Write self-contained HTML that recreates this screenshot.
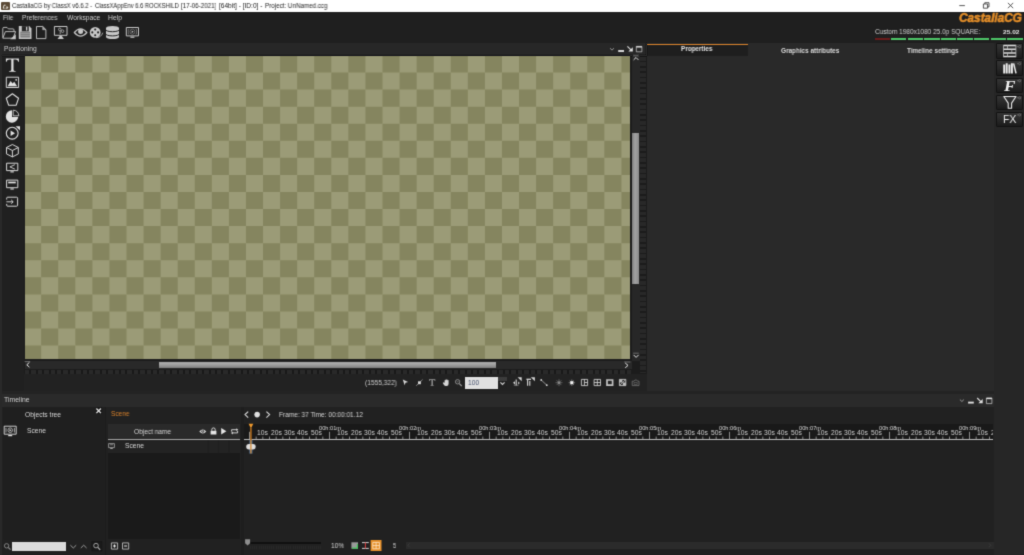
<!DOCTYPE html>
<html>
<head>
<meta charset="utf-8">
<title>CastaliaCG</title>
<style>
html,body{margin:0;padding:0;}
body{width:1024px;height:555px;overflow:hidden;background:#252525;font-family:"Liberation Sans",sans-serif;position:relative;color:#d0d0d0;font-size:6.6px;}
.a{position:absolute;}
.t{position:absolute;white-space:nowrap;line-height:1;transform-origin:0 50%;will-change:transform;}
svg{position:absolute;overflow:visible;}
#titlebar{left:0;top:0;width:1024px;height:12px;background:#fff;}
#menubar{left:0;top:12px;width:1024px;height:31px;background:#1f1f1f;}
#poshead{left:0;top:42.6px;width:646px;height:12.9px;background:#272727;}
#lefttools{left:0;top:55.5px;width:25px;height:336px;background:#202020;}
#canvasbg{left:24px;top:55.5px;width:623px;height:318px;background:#1c1c1c;}
#canvasbar{left:24px;top:374px;width:623px;height:18px;background:#222;}
#checker{left:25px;top:56px;width:605.3px;height:303px;background:#9b9b77;overflow:hidden;}
#rightpanel{left:646.5px;top:43px;width:347.5px;height:349px;background:#292929;}
#rightstrip{left:994px;top:43px;width:30px;height:512px;background:#262626;}
#gap{left:0;top:391.2px;width:994px;height:2.8px;background:#232323;}
#tlhead{left:0;top:393.8px;width:994px;height:13px;background:#2a2a2a;}
#tlbody{left:0;top:406.8px;width:994px;height:149px;background:#212121;}
#lframe{left:0;top:42.6px;width:2.3px;height:513px;background:#292929;}
.btn{position:absolute;left:996.2px;width:27.2px;height:15.8px;background:linear-gradient(#343434,#2a2a2a 45%,#1b1b1b);border:0.7px solid #121212;box-sizing:border-box;border-radius:1px;}
#root{position:absolute;left:0;top:0;width:1024px;height:555px;overflow:hidden;filter:url(#soft);}
</style>
</head>
<body>
<svg width="0" height="0" style="position:absolute"><defs><filter id="soft" x="0" y="0" width="1" height="1" color-interpolation-filters="sRGB"><feConvolveMatrix order="3" kernelMatrix="0.0192 0.1001 0.0192 0.1001 0.5228 0.1001 0.0192 0.1001 0.0192" edgeMode="duplicate" preserveAlpha="true"/></filter></defs></svg>
<div id="root">
<div class="a" id="titlebar"></div>
<div class="a" id="menubar"></div>
<div class="a" id="poshead"></div>
<div class="a" id="lefttools"></div>
<div class="a" id="canvasbg"></div>
<div class="a" id="canvasbar"></div>
<div class="a" id="checker"><svg width="606" height="303" style="left:0;top:0" stroke="#85855f" stroke-width="17.0667" stroke-dasharray="17.0667 17.0667"><path d="M-0.90 7.98h640" stroke-dashoffset="17.0667"/><path d="M-0.90 25.05h640" stroke-dashoffset="0.0000"/><path d="M-0.90 42.12h640" stroke-dashoffset="17.0667"/><path d="M-0.90 59.18h640" stroke-dashoffset="0.0000"/><path d="M-0.90 76.25h640" stroke-dashoffset="17.0667"/><path d="M-0.90 93.32h640" stroke-dashoffset="0.0000"/><path d="M-0.90 110.38h640" stroke-dashoffset="17.0667"/><path d="M-0.90 127.45h640" stroke-dashoffset="0.0000"/><path d="M-0.90 144.52h640" stroke-dashoffset="17.0667"/><path d="M-0.90 161.58h640" stroke-dashoffset="0.0000"/><path d="M-0.90 178.65h640" stroke-dashoffset="17.0667"/><path d="M-0.90 195.72h640" stroke-dashoffset="0.0000"/><path d="M-0.90 212.78h640" stroke-dashoffset="17.0667"/><path d="M-0.90 229.85h640" stroke-dashoffset="0.0000"/><path d="M-0.90 246.92h640" stroke-dashoffset="17.0667"/><path d="M-0.90 263.98h640" stroke-dashoffset="0.0000"/><path d="M-0.90 281.05h640" stroke-dashoffset="17.0667"/><path d="M-0.90 298.12h640" stroke-dashoffset="0.0000"/><path d="M-0.90 315.18h640" stroke-dashoffset="17.0667"/></svg></div>
<div class="a" id="rightpanel"></div>
<div class="a" id="rightstrip"></div>
<div class="a" id="gap"></div>
<div class="a" id="tlhead"></div>
<div class="a" id="tlbody"></div>
<div class="a" id="lframe"></div>
<div class="a" style="left:1px;top:1.5px;width:8.5px;height:8.5px;background:#5b4a36;border-radius:1px"></div>
<svg width="9" height="9" style="left:1px;top:1.5px" viewBox="0 0 9 9"><path d="M2.2 6.2 L3 3.2 L4.6 3.2 M2.2 6.2 L3.6 6.2 M4.6 6.2 L6.6 6.2 L6.8 5 L5.2 5" fill="none" stroke="#f2efe8" stroke-width="0.9"/></svg>
<svg width="1024" height="12" style="left:0;top:0" fill="none" stroke="#222" stroke-width="0.75"><path d="M959.3 5.6h5.6"/><path d="M983.4 4h4.2v4.2h-4.2zM984.8 4v-1.3h4.2v4.2h-1.4"/><path d="M1007.9 2.9l5.3 5.3M1013.2 2.9l-5.3 5.3"/></svg>
<div class="a" style="left:874.6px;top:38.3px;width:15.4px;height:2.2px;background:#6a1a1a"></div><div class="a" style="left:891.0px;top:38.3px;width:15.4px;height:2.2px;background:#4ec768"></div><div class="a" style="left:907.6px;top:38.3px;width:15.4px;height:2.2px;background:#4ec768"></div><div class="a" style="left:924.2px;top:38.3px;width:15.4px;height:2.2px;background:#4ec768"></div><div class="a" style="left:940.8px;top:38.3px;width:15.4px;height:2.2px;background:#4ec768"></div><div class="a" style="left:957.4px;top:38.3px;width:15.4px;height:2.2px;background:#4ec768"></div><div class="a" style="left:974.0px;top:38.3px;width:15.4px;height:2.2px;background:#4ec768"></div><div class="a" style="left:990.6px;top:38.3px;width:15.4px;height:2.2px;background:#4ec768"></div><div class="a" style="left:1007.2px;top:38.3px;width:15.4px;height:2.2px;background:#4ec768"></div>
<svg width="150" height="20" style="left:0;top:23px" viewBox="0 23 150 20" fill="none" stroke="#c8c8c8" stroke-width="0.9" stroke-linejoin="round"><path d="M2.8 37.6V28.6q0-1.2 1.2-1.2h3l1.4 1.5h4.6q1 0 1 1v1.4"/><path d="M2.8 38.2l2.6-6.6h10.2l-2.6 6.6z"/><path d="M15.8 34.3v4.9h-5.6z" fill="#c8c8c8" stroke="none"/><path d="M18.8 26.1h10.4l2.3 2.3v10.5h-12.7z" fill="#c8c8c8" stroke="none"/><path d="M21.8 26.1h7v5.3h-7z" fill="#262626" stroke="none"/><path d="M26 26.8h1.3v3.6h-1.3z" fill="#c8c8c8" stroke="none"/><path d="M20.3 31.6h9.8v6h-9.8z" fill="#808080" stroke="none"/><path d="M20.3 33.4h9.8M20.3 35.4h9.8" stroke="#a8a8a8" stroke-width="0.6"/><path d="M36.5 26.5h6.2l3.2 3.2v8.9h-9.4z"/><path d="M42.7 26.5v3.2h3.2z" stroke-width="0.5" fill="#a0a0a0"/><path d="M54.4 26.5h12.6v8.8h-12.6z" stroke-width="1"/><path d="M60 35.6h1.4l2.5 3.3h-6.4z" fill="#c8c8c8" stroke="none"/><circle cx="59.8" cy="29.4" r="1.3" stroke-width="0.7"/><circle cx="62.6" cy="31.2" r="1.3" stroke-width="0.7"/><path d="M60.2 31v3" stroke-width="0.7"/><path d="M74.3 32.5q6.2-7.2 12.6 0q-6.4 7.2-12.6 0z" stroke-width="1.15"/><circle cx="80.6" cy="31.6" r="2.5" fill="#c8c8c8" stroke="none"/><circle cx="95.2" cy="32.4" r="5.4" fill="#c8c8c8" stroke="none"/><circle cx="95.2" cy="29.5" r="1.05" fill="#222" stroke="none"/><circle cx="95.2" cy="35.3" r="1.05" fill="#222" stroke="none"/><circle cx="92.3" cy="32.4" r="1.05" fill="#222" stroke="none"/><circle cx="98.1" cy="32.4" r="1.05" fill="#222" stroke="none"/><path d="M96 37.7q5 0 6.8-5" stroke-width="0.8"/><path d="M106 28a6.5 2 0 0 1 13 0v9a6.5 2 0 0 1-13 0z" fill="#c8c8c8" stroke="none"/><path d="M105.6 29.6a6.9 2.1 0 0 0 13.8 0" stroke="#1e1e1e" stroke-width="1"/><path d="M105.6 33.8a6.9 2.1 0 0 0 13.8 0" stroke="#1e1e1e" stroke-width="1"/><path d="M126.3 27.5h12.2v8.4h-12.2z" stroke-width="1"/><path d="M130.4 37.2h4" stroke-width="1.2"/><circle cx="132.4" cy="31.7" r="2.5" stroke-width="0.6" stroke="#9a9a9a"/><path d="M131.7 30.5l2 1.2l-2 1.2z" fill="#c8c8c8" stroke="none"/><path d="M129.4 29.3h-1.1v4.8h1.1M135.4 29.3h1.1v4.8h-1.1" stroke-width="0.6" stroke="#9a9a9a"/></svg>
<svg width="25" height="160" style="left:0;top:55px" viewBox="0 55 25 160" fill="none" stroke="#e2e2e2" stroke-width="0.95" stroke-linejoin="round"></svg>
<svg width="25" height="20" style="left:0;top:55px" viewBox="0 55 25 20"><path d="M5.9 58.4h13v3.4h-0.7q-0.3-2.2-2.6-2.2h-2.1v10.2q0 1.1 1.1 1.2l1 .1v.7h-6.4v-.7l1-.1q1.1-.1 1.1-1.2v-10.2h-2.1q-2.3 0-2.6 2.2h-0.7z" fill="#e2e2e2"/></svg>
<svg width="25" height="160" style="left:0;top:55px" viewBox="0 55 25 160" fill="none" stroke="#e2e2e2" stroke-width="0.95" stroke-linejoin="round"><path d="M6.3 77.2h12.3v10.3h-12.3z"/><path d="M7.6 86.2l3-5.2l2 2.6l1.6-1.8l3 4.4z" fill="#e2e2e2" stroke="none"/><circle cx="16.2" cy="79.8" r="0.9" fill="#e2e2e2" stroke="none"/><path d="M12.4 93.8l6.1 4.5l-2.3 6.9h-7.6l-2.3-6.9z" stroke-width="1.1"/><path d="M12 110.3a6.2 6.2 0 1 0 6.2 6.6h-6.2z" fill="#e2e2e2" stroke="none"/><path d="M13.2 110.2a6 6 0 0 1 5.6 5.6h-5.6z" stroke-width="0.8"/><circle cx="12.2" cy="133.2" r="5.9" stroke-width="1.1"/><path d="M10.6 130.4l4.4 2.8l-4.4 2.8z" fill="#e2e2e2" stroke="none"/><path d="M15.6 126.2h4.4v4.4z" fill="#e2e2e2" stroke="none"/><path d="M12.4 144.5l5.9 3v6.4l-5.9 3l-5.9-3v-6.4z"/><path d="M6.5 147.5l5.9 3l5.9-3M12.4 150.5v6.4"/><path d="M6.6 163.2h11.2v7.4h-11.2z"/><path d="M10.4 171.9h3.4" stroke-width="1.1"/><path d="M14.9 164.7l-5 2.2l5 2.2" stroke-width="0.85"/><path d="M6.6 180.1h11.2v7.6h-11.2z"/><path d="M10.4 189h3.4" stroke-width="1.1"/><path d="M8.2 182.5h7.6" stroke-width="1.7"/><path d="M6.7 199.6v-1.4q0-1 1-1h8.9q1 0 1 1v7q0 1-1 1h-8.9q-1 0-1-1v-1.3"/><path d="M6.4 201.8h6.6M11.2 199.9l2 1.9l-2 1.9" stroke-width="0.9"/></svg>
<svg width="40" height="12" style="left:606px;top:43px" viewBox="606 43 40 12" fill="none" stroke="#e0e0e0" stroke-width="0.9"><path d="M610 48.2l2 1.9l2-1.9" stroke="#b0b0b0" stroke-width="0.8"/><path d="M618.2 51h5.8" stroke-width="1.9"/><path d="M627.4 46.3l4.6 4.6" stroke-width="1.1"/><path d="M632.8 47.2v4.4h-4.4z" fill="#e0e0e0" stroke="none"/><path d="M636.3 46.4h5.6v5.4h-5.6z" stroke-width="0.7" stroke="#cfcfcf"/><path d="M636.3 46.9h5.6" stroke-width="1.3"/></svg>
<div class="a" style="left:631.5px;top:55.5px;width:8px;height:305px;background:#272727"></div>
<div class="a" style="left:632.3px;top:133px;width:6.9px;height:150.8px;background:linear-gradient(90deg,#7e7e7e,#a2a2a2 45%,#8c8c8c)"></div>
<div class="a" style="left:640px;top:57px;width:6.2px;height:316px;background:repeating-linear-gradient(180deg,#282828 0,#282828 3.8px,#1b1b1b 3.8px,#1b1b1b 5.333px)"></div>
<svg width="10" height="310" style="left:631px;top:55px" viewBox="631 55 10 310" fill="none" stroke="#e4e4e4" stroke-width="1"><path d="M633.2 55.7h5.4" stroke="#8a8a8a" stroke-width="0.7"/><path d="M633.6 59.9l2.4-2.4l2.4 2.4"/><path d="M633.2 353.2h5.6" stroke="#8a8a8a" stroke-width="0.7"/><path d="M633.6 354.9l2.5 2.5l2.5-2.5"/></svg>
<div class="a" style="left:24.5px;top:360.6px;width:607px;height:8px;background:#292929"></div>
<div class="a" style="left:158.5px;top:361.7px;width:337.5px;height:6.4px;background:linear-gradient(180deg,#a2a2a2,#a8a8a8 30%,#8a8a8a 80%,#7a7a7a)"></div>
<div class="a" style="left:25px;top:369.6px;width:606px;height:4px;background:repeating-linear-gradient(90deg,#292929 0,#292929 4.4px,#191919 4.4px,#191919 6.4px)"></div>
<svg width="620" height="10" style="left:20px;top:360px" viewBox="20 360 620 10" fill="none" stroke="#e4e4e4" stroke-width="1"><path d="M24.6 361.6h5.6" stroke="#8a8a8a" stroke-width="0.7"/><path d="M29.4 362.4l-2.6 2.4l2.6 2.4"/><path d="M624.2 362h6.2" stroke="#8a8a8a" stroke-width="0.7"/><path d="M625.2 363l2.8 2.4l-2.8 2.4"/></svg>
<div class="a" style="left:647.3px;top:44px;width:100.3px;height:11.6px;background:#1e1e1e"></div>
<div class="a" style="left:647.3px;top:43.6px;width:100.3px;height:1.9px;background:#d9822b"></div>
<div class="btn" style="top:43.40px"></div>
<div class="btn" style="top:60.47px"></div>
<div class="btn" style="top:77.54px"></div>
<div class="btn" style="top:94.61px"></div>
<div class="btn" style="top:111.68px"></div>
<svg width="30" height="90" style="left:995px;top:42px" viewBox="995 42 30 90" fill="none" stroke="#ececec" stroke-width="0.9"><circle cx="1019.6" cy="46.60" r="1.1" stroke="#777" stroke-width="0.7"/><path d="M1018.2 46.60h-1.2" stroke="#777" stroke-width="0.7"/><circle cx="1019.6" cy="63.67" r="1.1" stroke="#777" stroke-width="0.7"/><path d="M1018.2 63.67h-1.2" stroke="#777" stroke-width="0.7"/><circle cx="1019.6" cy="80.74" r="1.1" stroke="#777" stroke-width="0.7"/><path d="M1018.2 80.74h-1.2" stroke="#777" stroke-width="0.7"/><circle cx="1019.6" cy="97.81" r="1.1" stroke="#777" stroke-width="0.7"/><path d="M1018.2 97.81h-1.2" stroke="#777" stroke-width="0.7"/><circle cx="1019.6" cy="114.88" r="1.1" stroke="#777" stroke-width="0.7"/><path d="M1018.2 114.88h-1.2" stroke="#777" stroke-width="0.7"/><path d="M1003.5 45.6h12.4M1003.5 49.3h12.4M1003.5 53h12.4M1003.5 56.6h12.4" stroke-width="1.5" stroke="#dcdcdc"/><path d="M1003.5 45v12.2M1015.9 45v12.2M1007.5 45v4M1011.8 49.3v4M1007.5 53v4" stroke-width="0.8" stroke="#bdbdbd"/><path d="M1004.2 64.6v9M1006.7 63.2v10.4M1009.4 64.6v9M1011.9 63.2v10.4" stroke-width="1.95"/><path d="M1013.6 63.4l2.4 10" stroke-width="1.5"/></svg>
<svg width="30" height="90" style="left:995px;top:42px" viewBox="995 42 30 90" fill="none" stroke="#ececec" stroke-width="1.1" stroke-linejoin="round"><path d="M1003.8 96.5h12.2l-4.4 6.6v5.2h-3.4v-5.2z"/></svg>
<svg width="250" height="16" style="left:400px;top:375px" viewBox="400 375 250 16" fill="none" stroke="#d6d6d6" stroke-width="0.9"><path d="M402.8 379.4l5.3 2.6l-2.6 .7l-0.9 2.5z" fill="#d6d6d6" stroke="none"/><path d="M416.2 385.8l6.4-6.2" stroke-width="0.8" stroke="#a0a0a0"/><path d="M418 381.3h2.9v2.9h-2.9z" fill="#d6d6d6" stroke="none"/><path d="M429 379.2h6.3v1.7h-0.4q-0.2-1-1.2-1h-0.9v4.7q0 .5 .6 .6l.4 .1v.4h-3.3v-.4l.4-.1q.6-.1 .6-.6v-4.7h-0.9q-1 0-1.2 1h-0.4z" fill="#a0a0a0" stroke="none"/><path d="M444.6 382.6v-2.2q0-.5.5-.5t.5.5v-0.6q0-.5.5-.5t.5.5v.1q0-.5.5-.5t.5.5v.5q0-.5.5-.5t.5.5v3.4q0 2.2-2 2.2h-.8q-1.2 0-1.8-1l-1.1-1.8q-.3-.6.3-.8t.9.4z" fill="#d6d6d6" stroke="none"/><circle cx="457.6" cy="381.8" r="2.2" stroke="#a0a0a0" stroke-width="0.8"/><path d="M459.3 383.6l2.4 2.4" stroke="#a0a0a0" stroke-width="1.1"/><path d="M456.6 381.8h2" stroke="#a0a0a0" stroke-width="0.6"/></svg>
<div class="a" style="left:465.4px;top:377px;width:32.7px;height:11.6px;background:#e1e1e1"></div>
<div class="a" style="left:498.1px;top:377px;width:8.7px;height:11.6px;background:linear-gradient(#3c3c3c,#3a3a3a 35%,#1f1f1f 36%,#222)"></div>
<svg width="250" height="16" style="left:400px;top:375px" viewBox="400 375 250 16" fill="none" stroke="#d6d6d6" stroke-width="0.9"><path d="M500.4 382.3l2.1 2.1l2.1-2.1" stroke-width="1.1"/><path d="M516.2 379.6v6" stroke-width="1.1"/><path d="M513 382.8l2 -1.6v3.2z M518.2 381.4v3.2l1.6-1.6z" fill="#d6d6d6" stroke="none"/><path d="M517.6 377.2h4.1v4.1z" fill="#d6d6d6" stroke="none"/><path d="M513.8 385.2h4.8" stroke-width="0.7" stroke="#a0a0a0"/><path d="M526.4 379.3h4.6" stroke-width="1.3"/><path d="M527.6 379.6v6.2M529.8 381v4.8" stroke-width="1.1"/><path d="M530.8 377.2h4.1v4.1z" fill="#d6d6d6" stroke="none"/><path d="M541 379.8l6 5.6" stroke-width="0.9" stroke="#a0a0a0"/><circle cx="541.2" cy="380" r="0.9" fill="#d6d6d6" stroke="none"/><circle cx="546.8" cy="385.2" r="0.9" fill="#d6d6d6" stroke="none"/><path d="M559 379.2v7M555.5 382.7h7M556.6 380.3l4.8 4.8M561.4 380.3l-4.8 4.8" stroke="#747474" stroke-width="0.7"/><path d="M557.8 381.5h2.4v2.4h-2.4z" fill="#8a8a8a" stroke="none"/><path d="M571.8 379.4v6.6M568.5 382.7h6.6M569.6 380.5l4.4 4.4M574 380.5l-4.4 4.4" stroke="#a0a0a0" stroke-width="0.6"/><path d="M570.3 381.2h3v3h-3z" fill="#f4f4f4" stroke="none"/><path d="M581.4 379.4h6.2v6.2h-6.2zM584.4 379.4v6.2M584.4 382.5h3.2" stroke="#d4d4d4" stroke-width="0.85"/><path d="M594.1 379.4h6.4v6.2h-6.4zM597.3 379.4v6.2M594.1 382.5h6.4" stroke="#d4d4d4" stroke-width="0.85"/><path d="M607 380h5.6v5.2h-5.6z" stroke="#c4c4c4" stroke-width="1.7"/><path d="M619.4 379.4h6.4v6.2h-6.4z" stroke="#d4d4d4" stroke-width="0.85"/><path d="M619.4 379.4h3v3h-3zM622.8 382.6h3v3h-3z" fill="#bdbdbd" stroke="none"/><path d="M619.8 385.2l5.6-5.4" stroke="#d4d4d4" stroke-width="0.7"/><path d="M632.2 381.2h1.8l1-1.2h1.6l1 1.2h1.4v4.4h-6.8z" stroke="#747474" stroke-width="0.8"/><path d="M634 382.4h3.2v2h-3.2z" stroke="#747474" stroke-width="0.6"/></svg>
<svg width="40" height="12" style="left:956px;top:394px" viewBox="956 394 40 12" fill="none" stroke="#e0e0e0" stroke-width="0.9"><path d="M959.9 399.6l2 1.9l2-1.9" stroke="#b0b0b0" stroke-width="0.8"/><path d="M968.1 402.6h5.7" stroke-width="1.9"/><path d="M977.2 398l4.6 4.6" stroke-width="1.1"/><path d="M982.7 399v4.3h-4.3z" fill="#e0e0e0" stroke="none"/><path d="M986.4 398h5.5v5.6h-5.5z" stroke-width="0.7" stroke="#cfcfcf"/><path d="M986.4 398.5h5.5" stroke-width="1.3"/></svg>
<div class="a" style="left:2.8px;top:406.8px;width:102.6px;height:133.5px;background:#1f1f1f"></div>
<div class="a" style="left:105.4px;top:406.8px;width:1px;height:148px;background:#1c1c1c"></div>
<div class="a" style="left:95.5px;top:407.4px;width:6.6px;height:7px;background:#161616"></div>
<svg width="8" height="8" style="left:95px;top:407px" viewBox="95 407 8 8" stroke="#e4e4e4" stroke-width="1.35" fill="none"><path d="M96.4 408.5l4.5 4.6M100.9 408.5l-4.5 4.6"/></svg>
<svg width="16" height="12" style="left:3px;top:425px" viewBox="3 425 16 12" fill="none" stroke="#e0e0e0" stroke-width="0.9"><path d="M4.2 426.2h12v8h-12z"/><path d="M8.2 435.6h4" stroke-width="1.2"/><circle cx="10.2" cy="430.2" r="2.3" stroke-width="0.7"/><path d="M9.5 429l2 1.2l-2 1.2z" fill="#e0e0e0" stroke="none"/><path d="M6 427.9v4.6M14.4 427.9v4.6" stroke-width="0.7"/></svg>
<div class="a" style="left:107.5px;top:424.2px;width:132.3px;height:15.2px;background:#2a2a2a"></div>
<div class="a" style="left:107.5px;top:439.1px;width:132.3px;height:0.9px;background:#a4a4a4"></div>
<div class="a" style="left:107.5px;top:440px;width:132.3px;height:13px;background:#232323"></div>
<div class="a" style="left:107.5px;top:453px;width:132.3px;height:86px;background:#1a1a1a"></div>
<svg width="140" height="30" style="left:105px;top:424px" viewBox="105 424 140 30" fill="none" stroke="#e0e0e0" stroke-width="0.8"><path d="M108.6 443.6h5.8v4h-5.8z" stroke="#bdbdbd" stroke-width="0.7"/><path d="M110.2 448.5h2.6" stroke="#bdbdbd"/><path d="M110 444.8h3" stroke="#bdbdbd" stroke-width="0.6"/><path d="M199.3 431.5q3.5-4.2 7 0q-3.5 4.2-7 0z" fill="#dcdcdc" stroke="none"/><circle cx="202.8" cy="431.3" r="1.4" fill="#2a2a2a" stroke="none"/><circle cx="202.8" cy="431" r="0.8" fill="#dcdcdc" stroke="none"/><path d="M210.6 430.8h5.8v3.7h-5.8z" fill="#e6e6e6" stroke="none"/><path d="M211.8 430.8v-1.2a1.7 1.7 0 0 1 3.4 0v1.2" stroke-width="0.9" stroke="#e6e6e6"/><path d="M221.2 428l5.2 3.3l-5.2 3.3z" fill="#e6e6e6" stroke="none"/><path d="M231.6 431.6v-1.9h5.4M237.6 431v1.9h-5.4" stroke-width="0.9"/><path d="M236.4 428.2l1.8 1.5l-1.8 1.5zM232.8 431.4l-1.8 1.5l1.8 1.5z" fill="#e0e0e0" stroke="none"/><path d="M208.2 440v13M218.6 440v13M229 440v13" stroke="#1d1d1d" stroke-width="0.6"/></svg>
<svg width="135" height="14" style="left:0;top:540px" viewBox="0 540 135 14" fill="none" stroke="#8c8c8c" stroke-width="0.9"><circle cx="6.6" cy="545.8" r="2.2"/><path d="M8.3 547.5l2.2 2.2" stroke-width="1.2"/><path d="M70.4 545.2l2.9 2.8l2.9-2.8M80.8 548l2.9-2.8l2.9 2.8" stroke="#9a9a9a" stroke-width="1"/><path d="M91.8 541.7h10.2v9.3h-10.2z" fill="#1a1a1a" stroke="#141414" stroke-width="0.6"/><circle cx="96" cy="545.6" r="2.3" stroke="#b0b0b0"/><path d="M97.8 547.4l2.4 2.4" stroke="#b0b0b0" stroke-width="1.2"/><path d="M111.4 542.9h6.2v6.2h-6.2z" stroke="#cfcfcf" stroke-width="0.8"/><path d="M113 546h3M114.5 544.5v3" stroke="#eee" stroke-width="1"/><path d="M122.5 542.9h6.2v6.2h-6.2z" stroke="#cfcfcf" stroke-width="0.8"/><path d="M124.1 546h3" stroke="#eee" stroke-width="1"/></svg>
<div class="a" style="left:12px;top:542px;width:54.4px;height:8.8px;background:#dcdcdc"></div>
<div class="a" style="left:240.5px;top:406.8px;width:3.2px;height:148px;background:#1e1e1e"></div>
<div class="a" style="left:243.8px;top:423.8px;width:749.3px;height:15.6px;background:#191919"></div>
<div class="a" style="left:243.8px;top:439.2px;width:749.3px;height:0.9px;background:#bcbcbc"></div>
<svg width="40" height="10" style="left:242px;top:410px" viewBox="242 410 40 10" fill="none" stroke="#dedede" stroke-width="1.1"><path d="M248.2 411.6l-3.2 3l3.2 3M266.4 411.6l3.2 3l-3.2 3"/><circle cx="257.1" cy="414.6" r="2.8" fill="#e0e0e0" stroke="none"/></svg>
<svg width="760" height="20" style="left:240px;top:423px" viewBox="240 423 760 20" fill="none" stroke="#b0b0b0" stroke-width="0.75"><path d="M249.50 431.8V439.3M256.17 436.6V439.3M262.83 436.6V439.3M269.50 436.6V439.3M276.17 436.6V439.3M282.83 436.6V439.3M289.50 436.6V439.3M296.17 436.6V439.3M302.83 436.6V439.3M309.50 436.6V439.3M316.17 436.6V439.3M322.83 436.6V439.3M329.50 431.8V439.3M336.17 436.6V439.3M342.83 436.6V439.3M349.50 436.6V439.3M356.17 436.6V439.3M362.83 436.6V439.3M369.50 436.6V439.3M376.17 436.6V439.3M382.83 436.6V439.3M389.50 436.6V439.3M396.17 436.6V439.3M402.83 436.6V439.3M409.50 431.8V439.3M416.17 436.6V439.3M422.83 436.6V439.3M429.50 436.6V439.3M436.17 436.6V439.3M442.83 436.6V439.3M449.50 436.6V439.3M456.17 436.6V439.3M462.83 436.6V439.3M469.50 436.6V439.3M476.17 436.6V439.3M482.83 436.6V439.3M489.50 431.8V439.3M496.17 436.6V439.3M502.83 436.6V439.3M509.50 436.6V439.3M516.17 436.6V439.3M522.83 436.6V439.3M529.50 436.6V439.3M536.17 436.6V439.3M542.83 436.6V439.3M549.50 436.6V439.3M556.17 436.6V439.3M562.83 436.6V439.3M569.50 431.8V439.3M576.17 436.6V439.3M582.83 436.6V439.3M589.50 436.6V439.3M596.17 436.6V439.3M602.83 436.6V439.3M609.50 436.6V439.3M616.17 436.6V439.3M622.83 436.6V439.3M629.50 436.6V439.3M636.17 436.6V439.3M642.83 436.6V439.3M649.50 431.8V439.3M656.17 436.6V439.3M662.83 436.6V439.3M669.50 436.6V439.3M676.17 436.6V439.3M682.83 436.6V439.3M689.50 436.6V439.3M696.17 436.6V439.3M702.83 436.6V439.3M709.50 436.6V439.3M716.17 436.6V439.3M722.83 436.6V439.3M729.50 431.8V439.3M736.17 436.6V439.3M742.83 436.6V439.3M749.50 436.6V439.3M756.17 436.6V439.3M762.83 436.6V439.3M769.50 436.6V439.3M776.17 436.6V439.3M782.83 436.6V439.3M789.50 436.6V439.3M796.17 436.6V439.3M802.83 436.6V439.3M809.50 431.8V439.3M816.17 436.6V439.3M822.83 436.6V439.3M829.50 436.6V439.3M836.17 436.6V439.3M842.83 436.6V439.3M849.50 436.6V439.3M856.17 436.6V439.3M862.83 436.6V439.3M869.50 436.6V439.3M876.17 436.6V439.3M882.83 436.6V439.3M889.50 431.8V439.3M896.17 436.6V439.3M902.83 436.6V439.3M909.50 436.6V439.3M916.17 436.6V439.3M922.83 436.6V439.3M929.50 436.6V439.3M936.17 436.6V439.3M942.83 436.6V439.3M949.50 436.6V439.3M956.17 436.6V439.3M962.83 436.6V439.3M969.50 431.8V439.3M976.17 436.6V439.3M982.83 436.6V439.3M989.50 436.6V439.3"/></svg>
<div class="a" style="z-index:2;left:993.1px;top:420px;width:1px;height:22px;background:#212121"></div>
<div class="a" style="z-index:2;left:994px;top:420px;width:30px;height:22px;background:#262626"></div>
<svg width="14" height="34" style="left:244px;top:422px" viewBox="244 422 14 34" fill="none"><path d="M250.9 440.2v13.4" stroke="#46658a" stroke-width="3.3"/><path d="M248.9 444h4.1a2.7 2.7 0 0 1 0 5.4h-4.1a2.7 2.7 0 0 1 0-5.4z" fill="#dedede"/><path d="M250.9 428v12" stroke="#b06c1e" stroke-width="1.6"/><path d="M250.9 440v13.6" stroke="#d38a35" stroke-width="1.3"/><path d="M248.6 423.8h4.7l-2.35 4.6z" fill="#f09a2e"/></svg>
<div class="a" style="left:250px;top:541.8px;width:70.5px;height:1.8px;background:#101010"></div>
<div class="a" style="left:250px;top:545.5px;width:70.5px;height:3px;background:repeating-linear-gradient(90deg,#282828 0,#282828 1px,#212121 1px,#212121 2.13px)"></div>
<svg width="8" height="8" style="left:244px;top:538px" viewBox="244 538 8 8"><path d="M245.1 539.2h5v4l-2.5 2.2l-2.5-2.2z" fill="#8e8e8e"/></svg>
<svg width="40" height="14" style="left:348px;top:539px" viewBox="348 539 40 14" fill="none"><path d="M351.4 542.3h6.6v6.4h-6.6z" fill="#9a9a9a"/><path d="M352 548.2h5.4v-4.2" stroke="#43c35a" stroke-width="1.2"/><path d="M362 542.6h6.8M362 548.4h6.8" stroke="#e6e6e6" stroke-width="0.9"/><path d="M365.4 542.6v5.8" stroke="#d23b3b" stroke-width="1.1"/><path d="M370.6 540h10.9v11h-10.9z" fill="#e8912a"/><path d="M372.8 542.4h6.6v6.4h-6.6zM376.1 542.4v6.4M372.8 545.6h6.6" stroke="#fbe3c6" stroke-width="0.8"/></svg>
<div class="a" style="left:405.5px;top:541.6px;width:588px;height:7.4px;background:#2b2b2b"></div>
<svg width="600" height="10" style="left:400px;top:540px" viewBox="400 540 600 10" fill="none" stroke="#3c3c3c" stroke-width="0.9"><path d="M409.6 543.4l-1.8 1.9l1.8 1.9M989 543.4l1.8 1.9l-1.8 1.9"/></svg>
<span class="t" style="left:11.9px;top:3.28px;font-size:6.3px;color:#1c1c1c;transform:scaleX(0.9418);">CastaliaCG by ClassX v6.6.2 -</span>
<span class="t" style="left:94.7px;top:3.28px;font-size:6.3px;color:#1c1c1c;transform:scaleX(0.9198);">ClassXAppEnv 6.6 ROCKSHILD</span>
<span class="t" style="left:180.7px;top:3.28px;font-size:6.3px;color:#1c1c1c;transform:scaleX(0.9855);">[17-06-2021]</span>
<span class="t" style="left:219.4px;top:3.28px;font-size:6.3px;color:#1c1c1c;transform:scaleX(1.0419);">[64bit] - [ID:0] -</span>
<span class="t" style="left:264.6px;top:3.28px;font-size:6.3px;color:#1c1c1c;transform:scaleX(0.9905);">Project: UnNamed.ccg</span>
<span class="t" style="left:3px;top:14.92px;font-size:6.7px;color:#cdcdcd;transform:scaleX(0.9554);">File</span>
<span class="t" style="left:22.3px;top:14.92px;font-size:6.7px;color:#cdcdcd;transform:scaleX(0.9844);">Preferences</span>
<span class="t" style="left:66.5px;top:14.92px;font-size:6.7px;color:#cdcdcd;transform:scaleX(0.9902);">Workspace</span>
<span class="t" style="left:108.3px;top:14.92px;font-size:6.7px;color:#cdcdcd;transform:scaleX(1.0170);">Help</span>
<span class="t" style="left:959.3px;top:10.92px;font-size:13.2px;color:#e8912a;transform:scaleX(0.8938);font-weight:bold;font-style:italic;-webkit-text-stroke:0.55px #e8912a;">CastaliaCG</span>
<span class="t" style="left:874.6px;top:27.92px;font-size:7.2px;color:#d2d2d2;transform:scaleX(0.9034);">Custom 1980x1080 25.0p SQUARE:</span>
<span class="t" style="left:1002.5px;top:28.50px;font-size:6px;color:#e0e0e0;transform:scaleX(1.0989);font-weight:bold;">25.02</span>
<span class="t" style="left:4.2px;top:46.22px;font-size:6.7px;color:#cfcfcf;">Positioning</span>
<span class="t" style="left:681.3px;top:45.86px;font-size:6.6px;color:#e6e6e6;transform:scaleX(0.9594);font-weight:bold;">Properties</span>
<span class="t" style="left:780.6px;top:47.86px;font-size:6.6px;color:#dcdcdc;transform:scaleX(0.9658);font-weight:bold;">Graphics attributes</span>
<span class="t" style="left:906.5px;top:47.86px;font-size:6.6px;color:#dcdcdc;transform:scaleX(0.9619);font-weight:bold;">Timeline settings</span>
<span class="t" style="left:1003.8px;top:79.40px;font-size:15px;color:#f0f0f0;transform:scaleX(1.1382);font-family:'Liberation Serif',serif;font-style:italic;font-weight:bold;">F</span>
<span class="t" style="left:1003px;top:114.08px;font-size:11.3px;color:#f0f0f0;transform:scaleX(0.9143);">FX</span>
<span class="t" style="left:365.1px;top:380.12px;font-size:6.7px;color:#cfcfcf;transform:scaleX(0.9827);">(1555,322)</span>
<span class="t" style="left:467.8px;top:380.22px;font-size:6.7px;color:#4a5570;">100</span>
<span class="t" style="left:4.2px;top:396.92px;font-size:6.7px;color:#cfcfcf;transform:scaleX(1.0227);">Timeline</span>
<span class="t" style="left:25.4px;top:411.92px;font-size:6.7px;color:#d6d6d6;transform:scaleX(0.9872);">Objects tree</span>
<span class="t" style="left:26.9px;top:428.42px;font-size:6.7px;color:#d6d6d6;transform:scaleX(0.9911);">Scene</span>
<span class="t" style="left:111px;top:410.72px;font-size:6.7px;color:#d9822b;transform:scaleX(0.9700);">Scene</span>
<span class="t" style="left:134px;top:428.72px;font-size:6.7px;color:#d6d6d6;transform:scaleX(0.9757);">Object name</span>
<span class="t" style="left:125.3px;top:443.02px;font-size:6.7px;color:#d6d6d6;transform:scaleX(0.9858);">Scene</span>
<span class="t" style="left:279px;top:411.92px;font-size:6.7px;color:#d6d6d6;transform:scaleX(0.9770);">Frame: 37 Time: 00:00:01.12</span>
<span class="t" style="left:257.38px;top:430.26px;font-size:6.6px;color:#d0d0d0;transform:scaleX(1.0244);">10s</span>
<span class="t" style="left:270.72px;top:430.26px;font-size:6.6px;color:#d0d0d0;transform:scaleX(1.0244);">20s</span>
<span class="t" style="left:284.05px;top:430.26px;font-size:6.6px;color:#d0d0d0;transform:scaleX(1.0244);">30s</span>
<span class="t" style="left:297.38px;top:430.26px;font-size:6.6px;color:#d0d0d0;transform:scaleX(1.0244);">40s</span>
<span class="t" style="left:310.72px;top:430.26px;font-size:6.6px;color:#d0d0d0;transform:scaleX(1.0244);">50s</span>
<span class="t" style="left:318.5px;top:425.64px;font-size:5.4px;color:#d8d8d8;transform:scaleX(1.0484);">00h:01m</span>
<span class="t" style="left:337.38px;top:430.26px;font-size:6.6px;color:#d0d0d0;transform:scaleX(1.0244);">10s</span>
<span class="t" style="left:350.72px;top:430.26px;font-size:6.6px;color:#d0d0d0;transform:scaleX(1.0244);">20s</span>
<span class="t" style="left:364.05px;top:430.26px;font-size:6.6px;color:#d0d0d0;transform:scaleX(1.0244);">30s</span>
<span class="t" style="left:377.38px;top:430.26px;font-size:6.6px;color:#d0d0d0;transform:scaleX(1.0244);">40s</span>
<span class="t" style="left:390.72px;top:430.26px;font-size:6.6px;color:#d0d0d0;transform:scaleX(1.0244);">50s</span>
<span class="t" style="left:398.5px;top:425.64px;font-size:5.4px;color:#d8d8d8;transform:scaleX(1.0484);">00h:02m</span>
<span class="t" style="left:417.38px;top:430.26px;font-size:6.6px;color:#d0d0d0;transform:scaleX(1.0244);">10s</span>
<span class="t" style="left:430.72px;top:430.26px;font-size:6.6px;color:#d0d0d0;transform:scaleX(1.0244);">20s</span>
<span class="t" style="left:444.05px;top:430.26px;font-size:6.6px;color:#d0d0d0;transform:scaleX(1.0244);">30s</span>
<span class="t" style="left:457.38px;top:430.26px;font-size:6.6px;color:#d0d0d0;transform:scaleX(1.0244);">40s</span>
<span class="t" style="left:470.72px;top:430.26px;font-size:6.6px;color:#d0d0d0;transform:scaleX(1.0244);">50s</span>
<span class="t" style="left:478.5px;top:425.64px;font-size:5.4px;color:#d8d8d8;transform:scaleX(1.0484);">00h:03m</span>
<span class="t" style="left:497.38px;top:430.26px;font-size:6.6px;color:#d0d0d0;transform:scaleX(1.0244);">10s</span>
<span class="t" style="left:510.72px;top:430.26px;font-size:6.6px;color:#d0d0d0;transform:scaleX(1.0244);">20s</span>
<span class="t" style="left:524.05px;top:430.26px;font-size:6.6px;color:#d0d0d0;transform:scaleX(1.0244);">30s</span>
<span class="t" style="left:537.38px;top:430.26px;font-size:6.6px;color:#d0d0d0;transform:scaleX(1.0244);">40s</span>
<span class="t" style="left:550.72px;top:430.26px;font-size:6.6px;color:#d0d0d0;transform:scaleX(1.0244);">50s</span>
<span class="t" style="left:558.5px;top:425.64px;font-size:5.4px;color:#d8d8d8;transform:scaleX(1.0484);">00h:04m</span>
<span class="t" style="left:577.38px;top:430.26px;font-size:6.6px;color:#d0d0d0;transform:scaleX(1.0244);">10s</span>
<span class="t" style="left:590.72px;top:430.26px;font-size:6.6px;color:#d0d0d0;transform:scaleX(1.0244);">20s</span>
<span class="t" style="left:604.05px;top:430.26px;font-size:6.6px;color:#d0d0d0;transform:scaleX(1.0244);">30s</span>
<span class="t" style="left:617.38px;top:430.26px;font-size:6.6px;color:#d0d0d0;transform:scaleX(1.0244);">40s</span>
<span class="t" style="left:630.72px;top:430.26px;font-size:6.6px;color:#d0d0d0;transform:scaleX(1.0244);">50s</span>
<span class="t" style="left:638.5px;top:425.64px;font-size:5.4px;color:#d8d8d8;transform:scaleX(1.0484);">00h:05m</span>
<span class="t" style="left:657.38px;top:430.26px;font-size:6.6px;color:#d0d0d0;transform:scaleX(1.0244);">10s</span>
<span class="t" style="left:670.72px;top:430.26px;font-size:6.6px;color:#d0d0d0;transform:scaleX(1.0244);">20s</span>
<span class="t" style="left:684.05px;top:430.26px;font-size:6.6px;color:#d0d0d0;transform:scaleX(1.0244);">30s</span>
<span class="t" style="left:697.38px;top:430.26px;font-size:6.6px;color:#d0d0d0;transform:scaleX(1.0244);">40s</span>
<span class="t" style="left:710.72px;top:430.26px;font-size:6.6px;color:#d0d0d0;transform:scaleX(1.0244);">50s</span>
<span class="t" style="left:718.5px;top:425.64px;font-size:5.4px;color:#d8d8d8;transform:scaleX(1.0484);">00h:06m</span>
<span class="t" style="left:737.38px;top:430.26px;font-size:6.6px;color:#d0d0d0;transform:scaleX(1.0244);">10s</span>
<span class="t" style="left:750.72px;top:430.26px;font-size:6.6px;color:#d0d0d0;transform:scaleX(1.0244);">20s</span>
<span class="t" style="left:764.05px;top:430.26px;font-size:6.6px;color:#d0d0d0;transform:scaleX(1.0244);">30s</span>
<span class="t" style="left:777.38px;top:430.26px;font-size:6.6px;color:#d0d0d0;transform:scaleX(1.0244);">40s</span>
<span class="t" style="left:790.72px;top:430.26px;font-size:6.6px;color:#d0d0d0;transform:scaleX(1.0244);">50s</span>
<span class="t" style="left:798.5px;top:425.64px;font-size:5.4px;color:#d8d8d8;transform:scaleX(1.0484);">00h:07m</span>
<span class="t" style="left:817.38px;top:430.26px;font-size:6.6px;color:#d0d0d0;transform:scaleX(1.0244);">10s</span>
<span class="t" style="left:830.72px;top:430.26px;font-size:6.6px;color:#d0d0d0;transform:scaleX(1.0244);">20s</span>
<span class="t" style="left:844.05px;top:430.26px;font-size:6.6px;color:#d0d0d0;transform:scaleX(1.0244);">30s</span>
<span class="t" style="left:857.38px;top:430.26px;font-size:6.6px;color:#d0d0d0;transform:scaleX(1.0244);">40s</span>
<span class="t" style="left:870.72px;top:430.26px;font-size:6.6px;color:#d0d0d0;transform:scaleX(1.0244);">50s</span>
<span class="t" style="left:878.5px;top:425.64px;font-size:5.4px;color:#d8d8d8;transform:scaleX(1.0484);">00h:08m</span>
<span class="t" style="left:897.38px;top:430.26px;font-size:6.6px;color:#d0d0d0;transform:scaleX(1.0244);">10s</span>
<span class="t" style="left:910.72px;top:430.26px;font-size:6.6px;color:#d0d0d0;transform:scaleX(1.0244);">20s</span>
<span class="t" style="left:924.05px;top:430.26px;font-size:6.6px;color:#d0d0d0;transform:scaleX(1.0244);">30s</span>
<span class="t" style="left:937.38px;top:430.26px;font-size:6.6px;color:#d0d0d0;transform:scaleX(1.0244);">40s</span>
<span class="t" style="left:950.72px;top:430.26px;font-size:6.6px;color:#d0d0d0;transform:scaleX(1.0244);">50s</span>
<span class="t" style="left:958.5px;top:425.64px;font-size:5.4px;color:#d8d8d8;transform:scaleX(1.0484);">00h:09m</span>
<span class="t" style="left:977.38px;top:430.26px;font-size:6.6px;color:#d0d0d0;transform:scaleX(1.0244);">10s</span>
<span class="t" style="left:990.72px;top:430.26px;font-size:6.6px;color:#d0d0d0;transform:scaleX(1.0244);">20s</span>
<span class="t" style="left:330.5px;top:542.82px;font-size:6.7px;color:#d6d6d6;transform:scaleX(0.9634);">10%</span>
<span class="t" style="left:392.8px;top:542.82px;font-size:6.7px;color:#d6d6d6;transform:scaleX(0.8569);">5</span>
</div>
</body>
</html>
